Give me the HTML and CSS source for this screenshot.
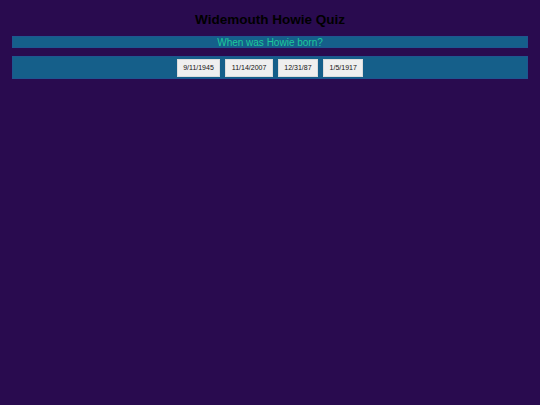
FILE: index.html
```html
<!DOCTYPE html>
<html>
<head>
<meta charset="utf-8">
<link rel="stylesheet" href="styles.css">
</head>
<body>
<h1 class="title">Widemouth Howie Quiz</h1>
<div class="question">When was Howie born?</div>
<div class="answers">
  <button class="answer">9/11/1945</button>
  <button class="answer">11/14/2007</button>
  <button class="answer">12/31/87</button>
  <button class="answer">1/5/1917</button>
</div>
</body>
</html>
```
FILE: styles.css
```css
html, body {
  margin: 0;
  padding: 0;
  background: #290b4f;
  height: 100%;
}
body {
  font-family: "Liberation Sans", Arial, sans-serif;
  padding: 0 12px;
}
.title {
  margin: 0;
  padding-top: 12px;
  height: 24px;
  font-size: 13.5px;
  line-height: 16px;
  font-weight: bold;
  color: #000;
  text-align: center;
}
.question {
  background: #155f8a;
  border: 1px solid #1d5690;
  height: 10px;
  line-height: 11px;
  font-size: 10px;
  color: #1dc99b;
  text-align: center;
}
.answers {
  margin-top: 8px;
  background: #155f8a;
  border: 1px solid #1d5690;
  height: 21px;
  display: flex;
  justify-content: center;
  align-items: center;
  gap: 5px;
}
.answer {
  font-family: "Liberation Sans", Arial, sans-serif;
  font-size: 7px;
  background: #efefef;
  color: #111;
  border: 1px solid #dcdcdc;
  height: 18px;
  padding: 0 5.5px;
  margin: 0;
}
```
